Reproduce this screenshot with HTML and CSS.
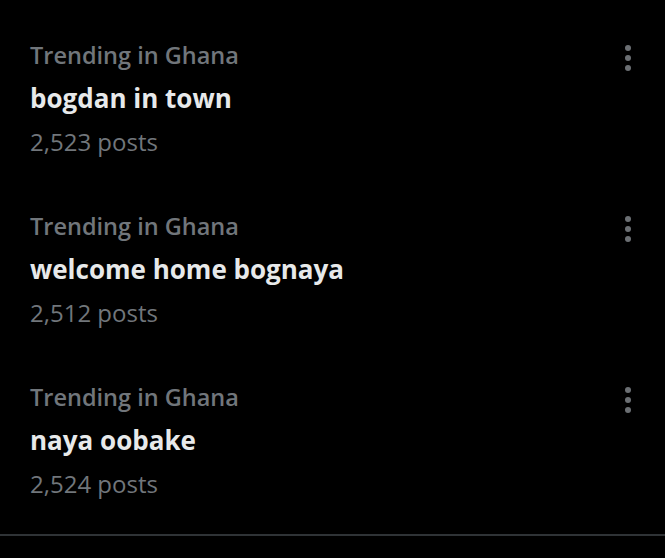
FILE: index.html
```html
<!DOCTYPE html>
<html lang="en">
<head>
  <meta charset="utf-8" />
  <title>Trending</title>
  <link rel="stylesheet" href="styles.css">
</head>
<body>
  <div class="trends">
    <div class="trend">
      <div class="trend-text">
        <div class="label">Trending in Ghana</div>
        <div class="title">bogdan in town</div>
        <div class="count">2,523 posts</div>
      </div>
      <div class="more"><span></span><span></span><span></span></div>
    </div>
    <div class="trend">
      <div class="trend-text">
        <div class="label">Trending in Ghana</div>
        <div class="title">welcome home bognaya</div>
        <div class="count">2,512 posts</div>
      </div>
      <div class="more"><span></span><span></span><span></span></div>
    </div>
    <div class="trend">
      <div class="trend-text">
        <div class="label">Trending in Ghana</div>
        <div class="title">naya oobake</div>
        <div class="count">2,524 posts</div>
      </div>
      <div class="more"><span></span><span></span><span></span></div>
    </div>
  </div>
  <div class="divider"></div>
</body>
</html>
```

FILE: styles.css
```css
body {
  margin: 0;
  background: #000;
  font-family: "Open Sans", "Liberation Sans", sans-serif;
  height: 558px;
  overflow: hidden;
}
.trends {
  padding-top: 13px;
  padding-bottom: 8px;
}
.trend {
  display: flex;
  justify-content: space-between;
  padding: 21px 34px 21px 30px;
}
.trend-text div {
  height: 43px;
  line-height: 43px;
  white-space: nowrap;
}
.label {
  font-size: 23.5px;
  font-weight: 600;
  color: #71767b;
}
.title {
  font-size: 26px;
  font-weight: 700;
  color: #e7e9ea;
}
.count {
  font-size: 24px;
  color: #71767b;
}
.more {
  display: flex;
  flex-direction: column;
  gap: 4px;
  padding-top: 11px;
}
.more span {
  width: 6px;
  height: 6px;
  border-radius: 50%;
  background: #6b6f73;
}
.divider {
  height: 2px;
  background: #2f3336;
}
```
